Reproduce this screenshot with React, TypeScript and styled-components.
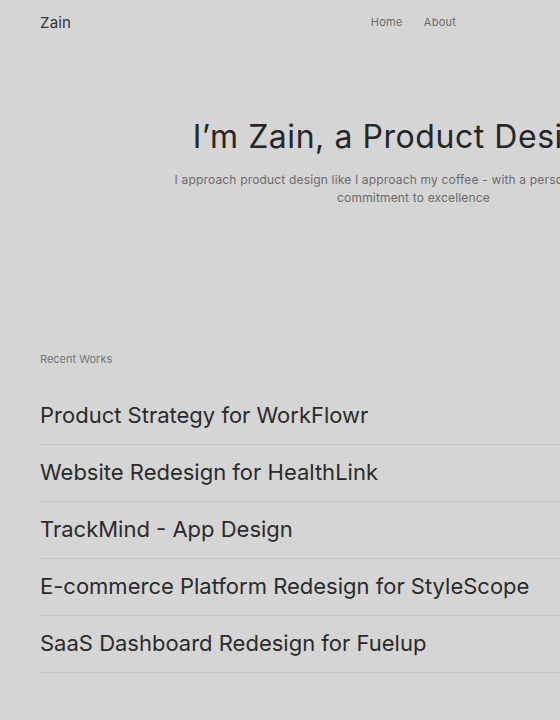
import React from "react";
import styled, { createGlobalStyle } from "styled-components";

const Global = createGlobalStyle`
  html, body {
    margin: 0;
    padding: 0;
    background: #d5d5d5;
    overflow-x: hidden;
  }
  body {
    font-family: Inter, "Open Sans", sans-serif;
    color: #2b2b2b;
  }
`;

const Page = styled.div`
  width: 827px;
  padding: 0 40px;
  box-sizing: border-box;
`;

const Header = styled.header`
  height: 44px;
  display: grid;
  grid-template-columns: 1fr auto 1fr;
  align-items: center;
`;

const Logo = styled.div`
  font-size: 15px;
  color: #333;
  letter-spacing: 0.2px;
`;

const Nav = styled.nav`
  display: flex;
  gap: 21px;
`;

const NavLink = styled.a`
  font-size: 11px;
  letter-spacing: 0.3px;
  color: #6a6a6a;
  text-decoration: none;
`;

const Hero = styled.section`
  padding-top: 74px;
  display: flex;
  flex-direction: column;
  align-items: center;
  text-align: center;
`;

const Title = styled.h1`
  margin: 0;
  font-size: 32px;
  line-height: 38px;
  font-weight: 400;
  letter-spacing: 0.55px;
  color: #262626;
  white-space: nowrap;
`;

const Subtitle = styled.p`
  margin: 15px 0 0;
  max-width: 500px;
  font-size: 12px;
  line-height: 17.5px;
  letter-spacing: 0.17px;
  color: #6a6a6a;
`;

const Works = styled.section`
  margin-top: 146px;
`;

const Label = styled.div`
  font-size: 11px;
  line-height: 14px;
  color: #737373;
  margin-bottom: 22px;
`;

const List = styled.ul`
  list-style: none;
  margin: 0;
  padding: 0;
`;

const Item = styled.li`
  padding: 13px 0 15px;
  border-bottom: 1px solid #c5c5c5;
  font-size: 22px;
  line-height: 28px;
  color: #2b2b2b;
  white-space: nowrap;
`;

const works = [
  "Product Strategy for WorkFlowr",
  "Website Redesign for HealthLink",
  "TrackMind - App Design",
  "E-commerce Platform Redesign for StyleScope",
  "SaaS Dashboard Redesign for Fuelup",
];

export default function App() {
  return (
    <>
      <Global />
      <Page>
        <Header>
          <Logo>Zain</Logo>
          <Nav>
            <NavLink href="#">Home</NavLink>
            <NavLink href="#">About</NavLink>
          </Nav>
          <div />
        </Header>
        <Hero>
          <Title>I’m Zain, a Product Designer</Title>
          <Subtitle>
            I approach product design like I approach my coffee - with a personal touch and a
            commitment to excellence
          </Subtitle>
        </Hero>
        <Works>
          <Label>Recent Works</Label>
          <List>
            {works.map((w) => (
              <Item key={w}>{w}</Item>
            ))}
          </List>
        </Works>
      </Page>
    </>
  );
}
